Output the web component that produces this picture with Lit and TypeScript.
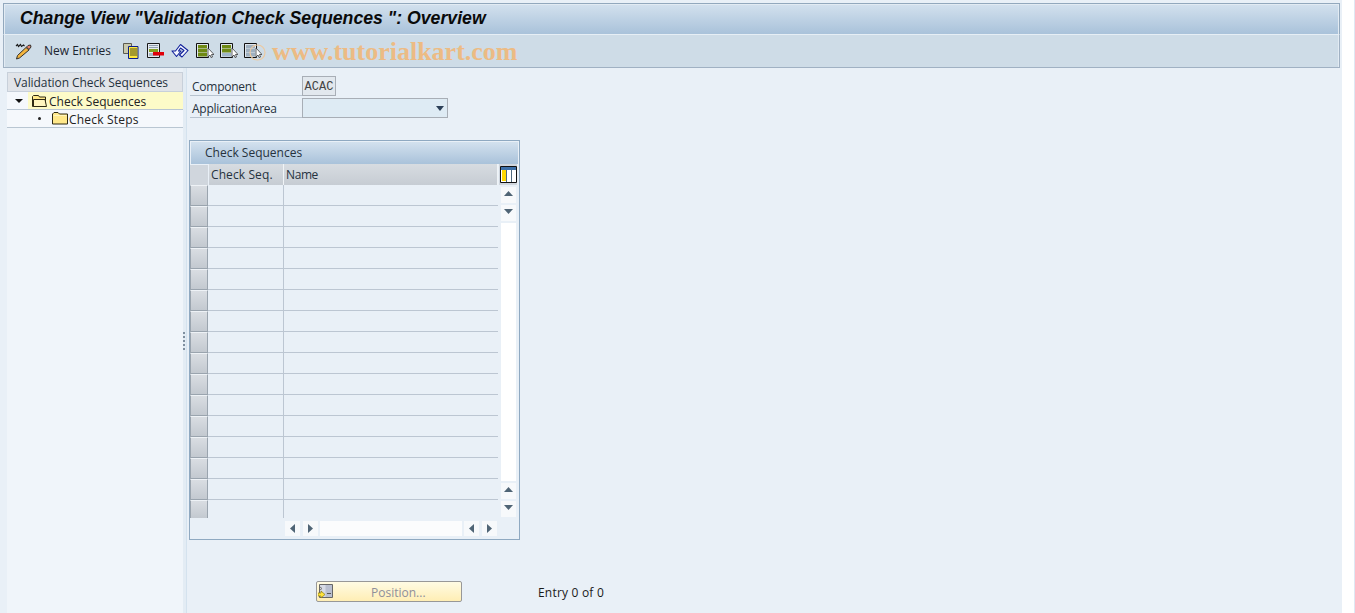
import { LitElement, html, css, svg } from "lit";
import { customElement } from "lit/decorators.js";

const up = svg`<svg width="9" height="5" viewBox="0 0 9 5"><path d="M4.500 0 9 5H0z" fill="#4f6475"/></svg>`;
const down = svg`<svg width="9" height="5" viewBox="0 0 9 5"><path d="M0 0h9L4.500 5z" fill="#4f6475"/></svg>`;
const left = svg`<svg width="5" height="9" viewBox="0 0 5 9"><path d="M5 0v9L0 4.500z" fill="#4f6475"/></svg>`;
const right = svg`<svg width="5" height="9" viewBox="0 0 5 9"><path d="M0 0v9l5-4.500z" fill="#4f6475"/></svg>`;

const folderOpen = svg`<svg width="17" height="14" viewBox="0 0 17 14"><path d="M1.500 12.500V2.500l1-1h5l1 1.500h6v9.500z" fill="#ffe98a" stroke="#2e2a14"/><path d="M2.500 5.500h11.500l1.500 7H2.500z" fill="#fff6c0" stroke="#2e2a14"/></svg>`;
const folder = svg`<svg width="16" height="13" viewBox="0 0 16 13"><path d="M.5 12V2L2 .5h4L7.500 2h8v10z" fill="#ffe88a" stroke="#2e2a14"/><path d="M1.500 3.500h13" stroke="#fff6c0"/></svg>`;

const pen = svg`<svg width="18" height="18" viewBox="0 0 18 18"><path d="M4.500 16l-3 1 1-3.500 8.500-8 3 2.500z" fill="#f4b43c" stroke="#33302a"/><path d="M11.500 5l1.500-1.500 2.500-.5.500 2-2 2.500z" fill="#e8806c" stroke="#33302a"/><path d="M1 4l1.500-1.500 1 2L5.500 2.500l1 2 2-1.500 1 1" fill="none" stroke="#1c1c1c" stroke-width="1.100"/></svg>`;
const copy = svg`<svg width="16" height="16" viewBox="0 0 16 16"><path d="M.5 .5h8v10h-8z" fill="#c9c9ae" stroke="#5c5c50"/><path d="M5.500 3.500h9.500v12H5.500z" fill="#ffe93c" stroke="#0b1e8a"/><path d="M7 6h7M7 8h7M7 10h7M7 12h7" stroke="#4a4a20"/></svg>`;
const del = svg`<svg width="17" height="16" viewBox="0 0 17 16"><path d="M.5 .5h12v14H.5z" fill="#e6ebf0" stroke="#181818"/><path d="M2 2.500h9M2 4.500h9" stroke="#8f9fae"/><path d="M2 6h9v3H2z" fill="#84a022"/><path d="M2 10h9v3H2z" fill="#a8b8c8"/><path d="M6 9h11v3.500H6z" fill="#e0000a"/></svg>`;
const undo = svg`<svg width="18" height="15" viewBox="0 0 18 15"><path d="M1 8h3.500L9.500 1.500 17 7.500 11 14l-2.500-2L13 7.500 9.500 5 7.500 8H10L5.500 13.500z" fill="#f4f7ff" stroke="#10209a" stroke-width="1.100" stroke-linejoin="round"/></svg>`;
const rows = (a: string, b: string, c: string) => svg`<svg width="18" height="16" viewBox="0 0 18 16"><path d="M.5 .5h12v14H.5z" fill="#dfe6ee" stroke="#111"/><path d="M2 2h9v3.500H2z" fill="${a}"/><path d="M2 6h9v3.500H2z" fill="${b}"/><path d="M2 10h9v3.500H2z" fill="${c}"/><path d="M12 5v9l2-2 1 2.500 1.500-.5-1-2.500h2.500z" fill="#fff" stroke="#222" stroke-width=".7"/></svg>`;
const colIcon = svg`<svg width="17" height="17" viewBox="0 0 17 17"><path d="M.5 .5h16v16H.5z" fill="#fff" stroke="#111"/><path d="M1 1h15v3H1z" fill="#3c6fa8"/><path d="M2 4h4v11H2z" fill="#ffd800"/><path d="M6.500 4v12M11.500 4v12" stroke="#506a80"/></svg>`;
const posIcon = svg`<svg width="15" height="15" viewBox="0 0 15 15"><path d="M1.500 .5h13v13h-13z" fill="#d7dbe6" stroke="#666"/><path d="M7.500 1h6.500v12H7.500z" fill="#b9bfd0"/><path d="M9 9.500h4" stroke="#555"/><path d="M2 3l2 1.500L2 6" fill="none" stroke="#777"/><path d="M0 9h3V7l4 3.500L3 14v-2H0z" fill="#ffe43c" stroke="#8a7a10" stroke-width=".7"/></svg>`;
const seal = svg`<svg width="17" height="17" viewBox="0 0 17 17"><circle cx="8.500" cy="8.500" r="7.500" fill="none" stroke="#ecc9a0" stroke-width="1.200"/></svg>`;

@customElement("app-root")
export class AppRoot extends LitElement {
  static styles = css`
    :host { display: block; width: 1355px; height: 613px; overflow: hidden;
      background: linear-gradient(to left, #dfe8f3 1px, #fff 1px);
      font-family: "Open Sans", "Liberation Sans", sans-serif; font-size: 12px; color: #222; }
    .frame { width: 1342px; height: 613px; background: #e9f0f7; padding-top: 3px; box-sizing: border-box;
      display: flex; flex-direction: column; }
    .title { margin: 0 0 0 3px; width: 1337px; height: 32px; box-sizing: border-box; flex: none;
      background: linear-gradient(#d3e1ee, #a9c2da); border: 1px solid #92a8bd; border-bottom: 1px solid #e6eef5;
      box-shadow: inset 1px 0 0 #e2ebf3, inset -1px 0 0 #e2ebf3, inset 0 1px 0 #e2ebf3;
      display: flex; align-items: center; padding: 0 0 2px 16px;
      font: italic bold 17.700px "Liberation Sans", sans-serif; color: #0a0a0a; }
    .tools { margin-left: 3px; width: 1337px; height: 33px; box-sizing: border-box; flex: none;
      background: #cedce7; border: 1px solid #a0b1c3; border-top: 0;
      box-shadow: inset 1px 0 0 #e2ebf3, inset -1px 0 0 #e2ebf3;
      display: flex; align-items: center; padding: 0 0 1px 11px; position: relative; }
    .tools svg { display: block; flex: none; }
    .new { margin: 0 12px 0 11px; color: #1c2530; }
    .ti { width: 24.300px; display: flex; justify-content: flex-start; }
    .wm { position: absolute; left: 268px; top: 2px; font: bold 26px "Liberation Serif", serif;
      color: #ecbb84; white-space: nowrap; }
    .seal { position: absolute; left: 245px; top: 9px; }
    .body { flex: 1; display: flex; min-height: 0; }
    .left { width: 176px; margin: 4px 0 0 7px; flex: none; background: #f0f5fa; }
    .lhead { height: 20px; box-sizing: border-box; background: #e1e4e9; border: 1px solid #c8d0da;
      display: flex; align-items: center; padding-left: 6px; color: #26323e; letter-spacing: -.08px; }
    .tree { height: 18px; box-sizing: border-box; display: flex; align-items: center; border-bottom: 1px solid #b9c6d2; background: #f5f8fc; }
    .tree span span { padding-top: 1px; }
    .tree.a { padding-left: 8px; }
    .sel { background: #fdfbc8; display: flex; align-items: center; height: 17px; flex: 1; gap: 1px; padding-left: 3px; margin-left: 5px; }
    .sel span { padding-top: 2px; }
    .tree.b { padding-left: 31px; gap: 11px; }
    .step { display: flex; align-items: center; gap: 1px; }
    .step span { padding-top: 2px; letter-spacing: .2px; }
    .dot { width: 3px; height: 3px; border-radius: 50%; background: #222; }
    .tri { width: 0; height: 0; border: 4px solid transparent; border-top: 4px solid #111; border-bottom: 0; }
    .sash { width: 3px; flex: none; display: flex; flex-direction: column; align-items: flex-start; justify-content: center; gap: 2px; background: #e3ecf4; }
    .sash i { width: 2px; height: 2px; background: #7f8f9f; display: block; }
    .main { flex: 1; background: #e9f0f7; border-left: 1px solid #d4e2ee; padding: 8px 0 0 0; min-width: 0; }
    .form { display: grid; grid-template-columns: 112px auto; grid-auto-rows: 22px; margin-left: 3px; justify-content: start; }
    .lab { border-bottom: 1px solid #b8c4d0; display: flex; align-items: center; padding: 2px 0 0 2px; color: #26323e; height: 20px; box-sizing: border-box; letter-spacing: -.25px; }
    .f1 { width: 34px; height: 20px; box-sizing: border-box; background: #e2e8ee; border: 1px solid #a8aeb6; padding-top: 2px;
      font: 12px "Liberation Mono", monospace; display: flex; align-items: center; justify-content: center; color: #444; }
    .f2 { width: 146px; height: 20px; box-sizing: border-box; background: #deebf4; border: 1px solid #a8aeb6; display: flex; align-items: center; justify-content: flex-end; padding-right: 3px; }
    .tri2 { width: 0; height: 0; border: 4px solid transparent; border-top: 5px solid #2c4058; border-bottom: 0; }
    .panel { width: 331px; height: 400px; box-sizing: border-box; margin: 20px 0 0 2px; border: 1px solid #8fa9c1; }
    .ptitle { height: 23px; box-sizing: border-box; background: linear-gradient(#d3e1ee, #a9c2da); border: 1px solid #e9f0f7; border-bottom: 0; padding: 0 0 2px 14px; display: flex; align-items: center; color: #26323e; }
    .hrow { display: flex; height: 21px; }
    .corner { width: 18px; margin-right: 1px; box-sizing: border-box; background: #d0d6dd; border-top: 1px solid #e9f0f7; }
    .hc { background: linear-gradient(#d7dce1, #c6ccd3); display: flex; align-items: center; padding-left: 2px; box-sizing: border-box; border-right: 1px solid #f0f4f7; color: #26323e; }
    .hc.c1 { width: 75px; letter-spacing: .1px; }
    .hc.c2 { width: 214px; letter-spacing: -.4px; }
    .setbtn { width: 18px; margin-left: 1px; display: flex; align-items: center; justify-content: center; background: #d0d6dd; }
    .setbtn svg { display: block; }
    .tb { display: flex; height: 333px; overflow: hidden; }
    .rh { width: 18px; flex: none; display: flex; flex-direction: column; }
    .rh div { height: 21px; flex: none; box-sizing: border-box; background: linear-gradient(#d9dde2, #c3c9d0); border: 1px solid #9aa4ae; border-top-color: #eef2f6; }
    .rh div:last-child { height: 19px; }
    .rows { width: 290px; flex: none; }
    .r { height: 21px; box-sizing: border-box; border-bottom: 1px solid #bcc6d2; display: flex; }
    .r span { width: 76px; box-sizing: border-box; border-right: 1px solid #bcc6d2; display: block; }
    .vs { width: 15px; height: 330px; flex: none; margin: 2px 0 0 3px; display: flex; flex-direction: column; gap: 2px; }
    .btn { background: #f7f9fb; display: flex; align-items: center; justify-content: center; flex: none; }
    .vs .btn { height: 16px; padding-bottom: 3px; box-sizing: border-box; }
    .vtrack { flex: 1; background: #fff; }
    .hs { display: flex; margin: 3px 0 0 95px; height: 15px; }
    .hs .btn { width: 15px; height: 15px; }
    .gap3 { margin-left: 3px; }
    .htrack { width: 142px; margin: 0 2px; background: #fbfcfd; }
    .foot { display: flex; align-items: center; margin: 41px 0 0 129px; }
    .pos { width: 146px; height: 21px; box-sizing: border-box; background: linear-gradient(#fffbe4, #ffeeb4); border: 1px solid #989898; border-radius: 2px; display: flex; align-items: center; padding-left: 1px; color: #8f8f9a; }
    .pos svg { display: block; flex: none; }
    .pos b { font-weight: normal; margin: 2px 0 0 38px; }
    .entry { margin: 2px 0 0 76px; color: #1a1a1a; letter-spacing: .2px; }
  `;

  render() {
    const n = Array.from({ length: 16 });
    return html`<div class="frame">
      <div class="title">Change View "Validation Check Sequences ": Overview</div>
      <div class="tools">
        ${pen}
        <span class="new">New Entries</span>
        <span class="ti">${copy}</span><span class="ti">${del}</span><span class="ti">${undo}</span>
        <span class="ti">${rows("#6f8a14", "#6f8a14", "#6f8a14")}</span>
        <span class="ti">${rows("#6f8a14", "#6f8a14", "#9fb4c8")}</span>
        <span class="ti">${rows("#9fb0bf", "#9fb0bf", "#9fb0bf")}</span>
        <span class="seal">${seal}</span>
        <span class="wm">www.tutorialkart.com</span>
      </div>
      <div class="body">
        <div class="left">
          <div class="lhead">Validation Check Sequences</div>
          <div class="tree a"><i class="tri"></i><div class="sel">${folderOpen}<span>Check Sequences</span></div></div>
          <div class="tree b"><i class="dot"></i><span class="step">${folder}<span>Check Steps</span></span></div>
        </div>
        <div class="sash"><i></i><i></i><i></i><i></i><i></i></div>
        <div class="main">
          <div class="form">
            <div class="lab">Component</div><div class="f1">ACAC</div>
            <div class="lab">ApplicationArea</div><div class="f2"><i class="tri2"></i></div>
          </div>
          <div class="panel">
            <div class="ptitle">Check Sequences</div>
            <div class="hrow"><div class="corner"></div><div class="hc c1">Check Seq.</div><div class="hc c2">Name</div><div class="setbtn">${colIcon}</div></div>
            <div class="tb">
              <div class="rh">${n.map(() => html`<div></div>`)}</div>
              <div class="rows">${n.map(() => html`<div class="r"><span></span></div>`)}</div>
              <div class="vs">
                <div class="btn">${up}</div><div class="btn">${down}</div>
                <div class="vtrack"></div>
                <div class="btn">${up}</div><div class="btn">${down}</div>
              </div>
            </div>
            <div class="hs">
              <div class="btn">${left}</div><div class="btn gap3">${right}</div>
              <div class="htrack"></div>
              <div class="btn">${left}</div><div class="btn gap3">${right}</div>
            </div>
          </div>
          <div class="foot">
            <div class="pos">${posIcon}<b>Position...</b></div>
            <div class="entry">Entry 0 of 0</div>
          </div>
        </div>
      </div>
    </div>`;
  }
}
